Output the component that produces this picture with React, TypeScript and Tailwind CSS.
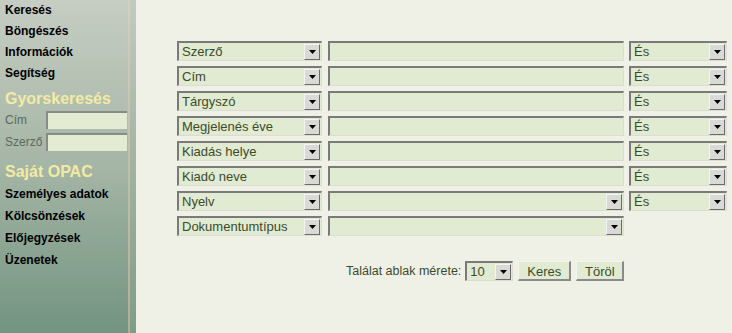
import React from 'react';

const font = { fontFamily: '"Liberation Sans", Arial, sans-serif' };

function Arrow() {
  return (
    <div className="flex h-[16px] w-[16px] shrink-0 items-center justify-center border border-t-[#f4f4f4] border-l-[#f4f4f4] border-r-[#6b6b6b] border-b-[#6b6b6b] bg-[#d9d9d6]">
      <svg width="7" height="4" viewBox="0 0 7 4">
        <path d="M0 0h7L3.5 4z" fill="#000" />
      </svg>
    </div>
  );
}

function Select({ label, width }: { label: string; width: string }) {
  return (
    <div
      className={`flex h-[20px] ${width} shrink-0 items-center justify-between border-t-2 border-l-2 border-r border-b border-t-[#7a7a7a] border-l-[#7a7a7a] border-r-[#dcdcd4] border-b-[#dcdcd4] bg-[#e1ebd1] pl-[3px] pr-[1px] text-[13px] text-[#3c4a2c]`}
    >
      <span className="leading-none">{label}</span>
      <Arrow />
    </div>
  );
}

function Input({ width }: { width: string }) {
  return (
    <div
      className={`h-[20px] ${width} shrink-0 border-t-2 border-l-2 border-r border-b border-t-[#7a7a7a] border-l-[#7a7a7a] border-r-[#dcdcd4] border-b-[#dcdcd4] bg-[#e1ebd1]`}
    />
  );
}

const rows = [
  { field: 'Szerző', kind: 'input', op: true },
  { field: 'Cím', kind: 'input', op: true },
  { field: 'Tárgyszó', kind: 'input', op: true },
  { field: 'Megjelenés éve', kind: 'input', op: true },
  { field: 'Kiadás helye', kind: 'input', op: true },
  { field: 'Kiadó neve', kind: 'input', op: true },
  { field: 'Nyelv', kind: 'select', op: true },
  { field: 'Dokumentumtípus', kind: 'select', op: false },
];

const menu1 = ['Keresés', 'Böngészés', 'Információk', 'Segítség'];
const menu2 = ['Személyes adatok', 'Kölcsönzések', 'Előjegyzések', 'Üzenetek'];

function SideInput() {
  return (
    <div className="h-[18px] w-[81px] border-t-2 border-l-2 border-t-[#8a8a8a] border-l-[#8a8a8a] bg-[#e3ebd2]" />
  );
}

function Sidebar() {
  return (
    <div className="flex h-[333px] w-[136px] shrink-0 bg-gradient-to-b from-[#c6cdc2] via-[#a5b5a6] to-[#729480]">
      <div className="w-[128px] pl-[5px] pr-[1px] pt-[3px]">
        {menu1.map((m) => (
          <div key={m} className="h-[21px] text-[12px] font-bold leading-[15px] text-black">
            {m}
          </div>
        ))}
        <div className="mt-[3px] text-[16px] font-bold leading-[18px] text-[#f2eba6]">Gyorskeresés</div>
        <div className="mt-[3px] flex items-center justify-between">
          <span className="text-[12px] text-[#5c6a5c]">Cím</span>
          <SideInput />
        </div>
        <div className="mt-[4px] flex items-center justify-between">
          <span className="text-[12px] text-[#5c6a5c]">Szerző</span>
          <SideInput />
        </div>
        <div className="mt-[12px] text-[16px] font-bold leading-[18px] text-[#f2eba6]">Saját OPAC</div>
        <div className="mt-[6px]">
          {menu2.map((m) => (
            <div key={m} className="h-[22px] text-[12px] font-bold leading-[15px] text-black">
              {m}
            </div>
          ))}
        </div>
      </div>
      <div className="w-[2px] bg-gradient-to-b from-[#d3d0bd] to-[#b3ad95]" />
      <div className="w-[6px] bg-gradient-to-b from-[#c2cabf] to-[#809c89]" />
    </div>
  );
}

export default function App() {
  return (
    <div className="flex h-[333px] w-[732px] overflow-hidden bg-[#eff1e6]" style={font}>
      <Sidebar />
      <div className="flex-1 pl-[41px] pt-[41px]">
        <div className="flex flex-col gap-[5px]">
          {rows.map((r) => (
            <div key={r.field} className="flex items-center">
              <Select label={r.field} width="w-[145px]" />
              <div className="w-[6px]" />
              {r.kind === 'input' ? <Input width="w-[296px]" /> : <Select label="" width="w-[296px]" />}
              {r.op && (
                <>
                  <div className="w-[5px]" />
                  <Select label="És" width="w-[98px]" />
                </>
              )}
            </div>
          ))}
        </div>
        <div className="mt-[25px] flex items-center pl-[169px] text-[12.5px] text-[#3c4a2c]">
          <span className="mr-[4px]">Találat ablak mérete:</span>
          <Select label="10" width="w-[48px]" />
          <button className="ml-[5px] h-[20px] w-[53px] border-t border-l border-r-2 border-b-2 border-t-[#f4f4ee] border-l-[#f4f4ee] border-r-[#8a8a8a] border-b-[#8a8a8a] bg-[#e1ebd1] text-[13px] text-[#3c4a2c]">
            Keres
          </button>
          <button className="ml-[5px] h-[20px] w-[48px] border-t border-l border-r-2 border-b-2 border-t-[#f4f4ee] border-l-[#f4f4ee] border-r-[#8a8a8a] border-b-[#8a8a8a] bg-[#e1ebd1] text-[13px] text-[#3c4a2c]">
            Töröl
          </button>
        </div>
      </div>
    </div>
  );
}
